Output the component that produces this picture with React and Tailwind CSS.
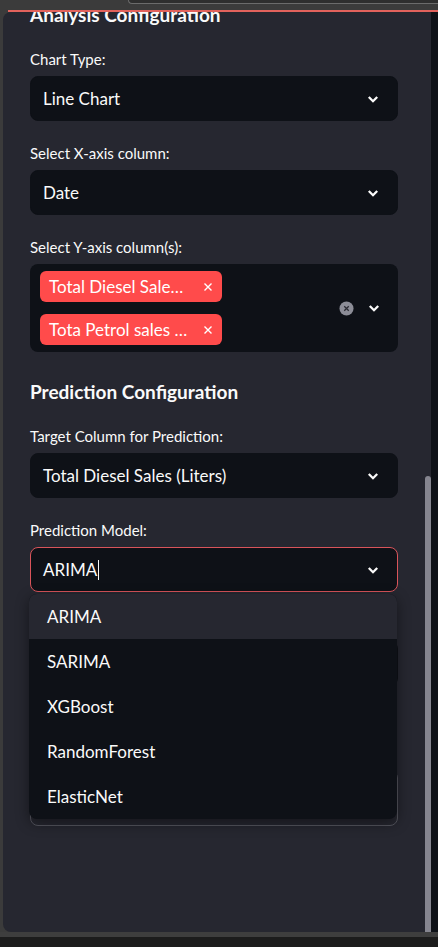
import React from "react";

const font = { fontFamily: '"Source Sans Pro", Lato, "Noto Sans", sans-serif' };

function Chevron() {
  return (
    <svg width="16" height="16" viewBox="0 0 16 16" className="shrink-0">
      <path d="M3.8 6 8 10.2 12.2 6" fill="none" stroke="#fafafa" strokeWidth="2.3" />
    </svg>
  );
}

function Label({ children }) {
  return <div className="h-5 text-[15px] leading-5 text-[#fafafa]">{children}</div>;
}

function Select({ value, focused = false, caret = false }) {
  return (
    <div
      className={
        "flex h-[45px] items-center justify-between rounded-lg border bg-[#0e1117] pl-3 pr-[16px] " +
        (focused ? "border-[#d9545a]" : "border-[#0e1117]")
      }
    >
      <span className="flex items-center text-[17px] text-[#fafafa]">
        {value}
        {caret && <span className="ml-[1px] inline-block h-[20px] w-px bg-[#fafafa]" />}
      </span>
      <Chevron />
    </div>
  );
}

function Tag({ text }) {
  return (
    <div className="flex h-[31px] w-[182px] items-center justify-between rounded-md bg-[#ff4b4b] pl-[9px] pr-[9px] text-[17px] text-white">
      <span className="whitespace-nowrap">{text}</span>
      <svg width="10" height="10" viewBox="0 0 10 10" className="shrink-0">
        <path d="M1.5 1.5 8.5 8.5M8.5 1.5 1.5 8.5" stroke="#fff" strokeWidth="1.4" />
      </svg>
    </div>
  );
}

function Field({ label, children }) {
  return (
    <div className="flex flex-col gap-[7px]">
      <Label>{label}</Label>
      {children}
    </div>
  );
}

export default function App() {
  const models = ["ARIMA", "SARIMA", "XGBoost", "RandomForest", "ElasticNet"];

  return (
    <div className="flex h-[947px] w-[438px] flex-col overflow-hidden bg-[#1c1c1c]" style={font}>
      {/* window chrome */}
      <div className="h-[10px] bg-[#3b3b3b]">
        <div className="ml-[128px] h-[4px] rounded-bl-lg border-b border-l border-[#6b6b6b] bg-[#2e2e2e]" />
      </div>
      <div className="flex h-[2px] bg-[#3b3b3b]">
        <div className="ml-[8px] flex-1 bg-[#e2625c]" />
      </div>

      <div className="flex h-[920px] bg-[#3b3b3b] pl-[3px]">
        <div className="flex flex-1 overflow-hidden rounded-l-lg bg-[#262730]">
          <div className="flex flex-1 flex-col px-[27px]">
            <h2 className="mt-[-9px] h-6 whitespace-nowrap text-[19px] font-bold leading-6 text-[#fafafa]">
              Analysis Configuration
            </h2>

            <div className="mt-[22px] flex flex-col gap-[22px]">
              <Field label="Chart Type:">
                <Select value="Line Chart" />
              </Field>
              <Field label="Select X-axis column:">
                <Select value="Date" />
              </Field>
              <Field label="Select Y-axis column(s):">
                <div className="flex h-[88px] items-center justify-between rounded-lg bg-[#0e1117] pl-[10px] pr-[16px]">
                  <div className="flex flex-col gap-[12px]">
                    <Tag text="Total Diesel Sale…" />
                    <Tag text="Tota Petrol sales …" />
                  </div>
                  <div className="flex items-center gap-[12px]">
                    <svg width="15" height="15" viewBox="0 0 16 16">
                      <circle cx="8" cy="8" r="7.5" fill="#8c8d97" />
                      <path d="M5.6 5.6 10.4 10.4M10.4 5.6 5.6 10.4" stroke="#2a2b33" strokeWidth="1.4" />
                    </svg>
                    <Chevron />
                  </div>
                </div>
              </Field>
            </div>

            <h2 className="mt-[28px] h-6 whitespace-nowrap text-[19px] font-bold leading-6 text-[#fafafa]">
              Prediction Configuration
            </h2>

            <div className="mt-[22px] flex flex-col gap-[22px]">
              <Field label="Target Column for Prediction:">
                <Select value="Total Diesel Sales (Liters)" />
              </Field>
              <Field label="Prediction Model:">
                <div className="relative">
                  <Select value="ARIMA" focused caret />
                  <div className="absolute left-[-1px] top-[47px] z-10 w-[368px] overflow-hidden rounded-lg bg-[#0e1117] shadow-[0_4px_14px_rgba(0,0,0,0.45)]">
                    {models.map((m, i) => (
                      <div
                        key={m}
                        className={
                          "flex h-[45px] items-center pl-[18px] text-[17px] text-[#fafafa] " +
                          (i === 0 ? "bg-[#262730]" : "")
                        }
                      >
                        {m}
                      </div>
                    ))}
                  </div>
                </div>
              </Field>
              <div className="mt-[27px] h-[45px] rounded-lg bg-[#0e1117]" />
            </div>

            <div className="mt-[84px] h-[56px] rounded-lg border border-[#55565f]" />
          </div>

          {/* scrollbar */}
          <div className="flex w-[6px] flex-col pt-[464px]">
            <div className="flex-1 rounded-t-sm bg-[#85858f]" />
          </div>
        </div>
        <div className="w-[7px] bg-[#0e1117]" />
      </div>

      <div className="h-[5px] bg-[#3e3e3e]" />
      <div className="flex-1 bg-[#1c1c1c]" />
    </div>
  );
}
